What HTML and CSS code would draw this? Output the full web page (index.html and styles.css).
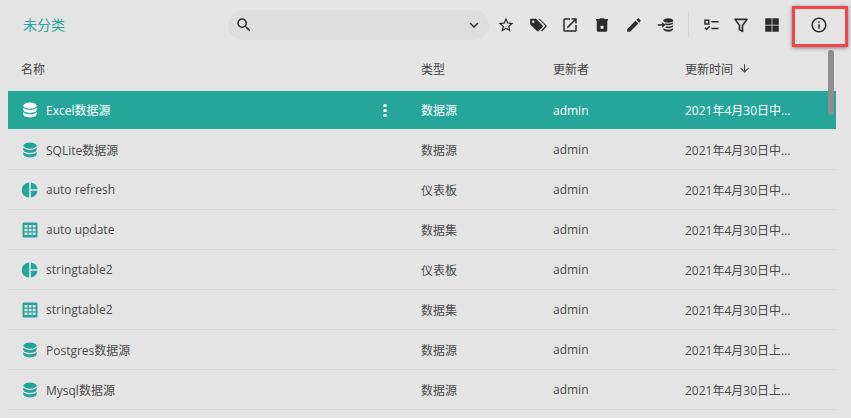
FILE: index.html
```html
<!DOCTYPE html>
<html lang="zh-CN">
<head>
<meta charset="UTF-8">
<title>未分类</title>
<link rel="stylesheet" href="styles.css">
</head>
<body>
<svg class="defs" width="0" height="0">
	<symbol id="i-db" viewBox="0 0 16 16"><ellipse cx="8" cy="3.6" rx="6.7" ry="3.1"/><path d="M1.300 5.600v2.200c0 1.700 3 3.100 6.700 3.100s6.700-1.400 6.700-3.100V5.600c-1.300 1.500-3.900 2.300-6.700 2.300s-5.400-.8-6.700-2.300z"/><path d="M1.300 10v2.300c0 1.700 3 3.100 6.700 3.100s6.700-1.400 6.700-3.100V10c-1.300 1.500-3.900 2.300-6.700 2.300S2.600 11.500 1.300 10z"/></symbol>
	<symbol id="i-pie" viewBox="0 0 16 16"><path d="M7.200 .5v15A7.500 7.500 0 0 1 7.200 .5z"/><path d="M8.800 .5a7.500 7.500 0 0 1 6.700 6.700H8.800z"/><path d="M8.800 8.800h6.700a7.500 7.500 0 0 1-6.700 6.700z"/></symbol>
	<symbol id="i-table" viewBox="0 0 16 16"><path fill-rule="evenodd" d="M1.500 .5h13a1 1 0 0 1 1 1v13a1 1 0 0 1-1 1h-13a1 1 0 0 1-1-1v-13a1 1 0 0 1 1-1zM2.500 3v2.500h3V3zm4.200 0v2.500h2.800V3zm4 0v2.500h2.800V3zM2.500 6.800v2.500h3V6.800zm4.200 0v2.500h2.800V6.800zm4 0v2.500h2.800V6.800zM2.500 10.500V13h3v-2.500zm4.200 0V13h2.800v-2.500zm4 0V13h2.800v-2.500z"/></symbol>
</svg>

<div class="page">
	<div class="toolbar">
		<div class="crumb">未分类</div>
		<div class="search">
			<svg class="ic" viewBox="0 0 24 24"><path d="M15.500 14h-.79l-.28-.27A6.470 6.470 0 0 0 16 9.500 6.500 6.500 0 1 0 9.500 16c1.610 0 3.090-.59 4.230-1.570l.27.28v.79l5 4.990L20.490 19l-4.990-5zm-6 0C7.010 14 5 11.990 5 9.500S7.010 5 9.500 5 14 7.010 14 9.500 11.990 14 9.500 14z"/></svg>
			<svg class="ic" viewBox="0 0 24 24"><path d="M7.410 8.590 12 13.170l4.590-4.580L18 10l-6 6-6-6z"/></svg>
		</div>
		<div class="tools">
			<svg class="ic" viewBox="0 0 24 24"><path d="M22 9.240l-7.190-.62L12 2 9.190 8.630 2 9.240l5.460 4.730L5.820 21 12 17.270 18.180 21l-1.630-7.030L22 9.240zM12 15.400l-3.760 2.270 1-4.280-3.320-2.880 4.380-.38L12 6.100l1.710 4.040 4.380.38-3.320 2.880 1 4.280L12 15.400z"/></svg>
			<svg class="ic" viewBox="0 0 24 24"><path fill-rule="evenodd" d="M1.500 3.500h7.200a1.500 1.500 0 0 1 1.100.4l8.400 8.600a1.500 1.500 0 0 1 0 2.100l-5.400 5.500a1.500 1.500 0 0 1-2.100 0L2 11.500a1.500 1.500 0 0 1-.5-1.100zM5.500 6a1.700 1.700 0 1 0 0 3.400 1.700 1.700 0 0 0 0-3.400z"/><path d="M12.500 3.500h1.800l8.700 8.900a1.800 1.800 0 0 1 0 2.400l-5.700 5.700-1.200-1.200 5.300-5.500a.8.8 0 0 0 0-1.100z"/></svg>
			<svg class="ic" viewBox="0 0 24 24"><path d="M19 19H5V5h7V3H5a2 2 0 0 0-2 2v14a2 2 0 0 0 2 2h14c1.100 0 2-.9 2-2v-7h-2v7zM14 3v2h3.590l-9.830 9.830 1.410 1.410L19 6.410V10h2V3h-7z"/></svg>
			<svg class="ic" viewBox="0 0 24 24"><path d="M15 4V3H9v1H4v2h1v13c0 1.100.9 2 2 2h10c1.100 0 2-.9 2-2V6h1V4h-5zm-.5 12.100-1.400 1.400-1.100-1.100-1.100 1.100-1.400-1.400 1.100-1.100-1.100-1.100 1.400-1.400 1.100 1.100 1.100-1.100 1.400 1.400-1.100 1.100 1.100 1.100z"/></svg>
			<svg class="ic" viewBox="0 0 24 24"><path d="M3 17.250V21h3.750L17.810 9.940l-3.750-3.750L3 17.250zM20.710 7.040a1 1 0 0 0 0-1.410l-2.340-2.340a1 1 0 0 0-1.410 0l-1.830 1.830 3.750 3.750 1.830-1.830z"/></svg>
			<svg class="ic" viewBox="0 0 24 24"><path d="M15 3c-3.600 0-6.500 1.300-6.500 3s2.900 3 6.500 3 6.500-1.300 6.500-3-2.900-3-6.500-3z"/><path d="M21.500 8c-1.300 1.400-3.700 2.300-6.500 2.300-1.600 0-3-.3-4.300-.8L9.500 11c1.300.7 3.300 1.300 5.500 1.300 3.600 0 6.500-1.300 6.500-3z"/><path d="M21.500 12c-1.300 1.400-3.700 2.300-6.500 2.300-.9 0-1.700-.1-2.500-.2l-1.700 1.600c1.200.4 2.700.6 4.200.6 3.600 0 6.500-1.300 6.500-3z"/><path d="M21.500 16c-1.300 1.400-3.700 2.300-6.500 2.300-2.800 0-5.200-.9-6.500-2.300v1.800c0 1.700 2.900 3.200 6.500 3.200s6.500-1.500 6.500-3.200z"/><path d="M1 11h6V8.200l4.300 3.800L7 15.800V13H1z"/></svg>
			<span class="sep"></span>
			<svg class="ic tight" viewBox="0 0 24 24"><path fill-rule="evenodd" d="M3 4.500h7v7H3zM5 6.500v3h3v-3z"/><path d="M12.500 6.500H22v2h-9.500zM12.500 15.500H22v2h-9.500zM3.200 16.300l1.400-1.400 1.500 1.500 3.500-3.500 1.400 1.400-4.900 4.900z"/></svg>
			<svg class="ic narrow" viewBox="0 0 24 24"><path fill="none" stroke="#2b2b2b" stroke-width="2.200" stroke-linejoin="round" d="M4 4.500h16l-6 8v8l-4-2v-6z"/></svg>
			<svg class="ic" viewBox="0 0 24 24"><path d="M3 3h8.500v8.500H3zM12.500 3H21v8.500h-8.500zM3 12.500h8.500V21H3zM12.500 12.500H21V21h-8.500z"/></svg>
			<svg class="ic info" viewBox="0 0 24 24"><path d="M11 7h2v2h-2zm0 4h2v6h-2zm1-9C6.480 2 2 6.480 2 12s4.480 10 10 10 10-4.480 10-10S17.520 2 12 2zm0 18c-4.410 0-8-3.590-8-8s3.590-8 8-8 8 3.590 8 8-3.590 8-8 8z"/></svg>
		</div>
	</div>

	<div class="head row-grid">
		<div class="head-name">名称</div>
		<div>类型</div>
		<div>更新者</div>
		<div class="head-time">更新时间
			<svg class="arrow" viewBox="0 0 24 24"><path d="M20 12l-1.410-1.410L13 16.170V4h-2v12.170l-5.580-5.590L4 12l8 8 8-8z"/></svg>
		</div>
	</div>

	<div class="row row-grid active">
		<div class="name"><svg class="kind"><use href="#i-db"/></svg>Excel数据源<span class="dots"><i></i><i></i><i></i></span></div>
		<div>数据源</div><div>admin</div><div>2021年4月30日中...</div>
	</div>
	<div class="row row-grid">
		<div class="name"><svg class="kind"><use href="#i-db"/></svg>SQLite数据源</div>
		<div>数据源</div><div>admin</div><div>2021年4月30日中...</div>
	</div>
	<div class="row row-grid">
		<div class="name"><svg class="kind"><use href="#i-pie"/></svg>auto refresh</div>
		<div>仪表板</div><div>admin</div><div>2021年4月30日中...</div>
	</div>
	<div class="row row-grid">
		<div class="name"><svg class="kind"><use href="#i-table"/></svg>auto update</div>
		<div>数据集</div><div>admin</div><div>2021年4月30日中...</div>
	</div>
	<div class="row row-grid">
		<div class="name"><svg class="kind"><use href="#i-pie"/></svg>stringtable2</div>
		<div>仪表板</div><div>admin</div><div>2021年4月30日中...</div>
	</div>
	<div class="row row-grid">
		<div class="name"><svg class="kind"><use href="#i-table"/></svg>stringtable2</div>
		<div>数据集</div><div>admin</div><div>2021年4月30日中...</div>
	</div>
	<div class="row row-grid">
		<div class="name"><svg class="kind"><use href="#i-db"/></svg>Postgres数据源</div>
		<div>数据源</div><div>admin</div><div>2021年4月30日上...</div>
	</div>
	<div class="row row-grid">
		<div class="name"><svg class="kind"><use href="#i-db"/></svg>Mysql数据源</div>
		<div>数据源</div><div>admin</div><div>2021年4月30日上...</div>
	</div>

	<div class="scrollbar"></div>
	<div class="callout"></div>
</div>
</body>
</html>
```

FILE: styles.css
```css
* {
	box-sizing: border-box;
}
html, body {
	margin: 0;
	height: 100%;
	overflow: hidden;
}
body {
	background: #e4e4e4;
	color: #4a4a4a;
	font-family: "Open Sans", "Noto Sans CJK SC", sans-serif;
	font-size: 12px;
}
.defs {
	position: absolute;
}
.page {
	position: relative;
	height: 418px;
	padding: 0 15px 0 8px;
}

/* top bar */
.toolbar {
	display: flex;
	align-items: center;
	height: 50px;
}
.crumb {
	flex: none;
	width: 220px;
	padding: 0 0 3px 15px;
	color: #26a69a;
	font-size: 14px;
}
.search {
	display: flex;
	flex: none;
	align-items: center;
	justify-content: space-between;
	width: 261px;
	height: 30px;
	padding: 0 6px 0 7px;
	background: #dedede;
	border-radius: 15px;
}
.ic {
	display: block;
	width: 18px;
	height: 18px;
	flex: none;
	fill: #2b2b2b;
}
.tools {
	display: flex;
	flex: none;
	align-items: center;
	padding-left: 8px;
}
.tools .ic {
	margin-right: 14px;
}
.sep {
	width: 1px;
	height: 26px;
	margin: 0 13px 0 -1px;
	background: #d8d8d8;
}
.tools .tight {
	margin-right: 12px;
}
.tools .narrow {
	margin-right: 13px;
}
.tools .info {
	margin: 0 0 0 15px;
}

/* table */
.row-grid {
	display: grid;
	grid-template-columns: 413px 132px 132px 1fr;
	align-items: center;
}
.head {
	height: 41px;
	padding-bottom: 4px;
	color: #444;
}
.head-name {
	padding-left: 13px;
}
.head-time {
	display: flex;
	align-items: center;
	gap: 5px;
}
.arrow {
	width: 13px;
	height: 13px;
	fill: #444;
}
.row {
	height: 40px;
	border-bottom: 1px solid #d9d9d9;
}
.row.active {
	height: 38px;
	margin-bottom: 1px;
	background: #26a69a;
	border-bottom: 0;
	color: #fff;
}
.name {
	display: flex;
	align-items: center;
	padding-left: 14px;
}
.kind {
	width: 16px;
	height: 16px;
	margin-right: 8px;
	fill: #26a69a;
}
.active .kind {
	fill: #fff;
}
.dots {
	display: flex;
	flex-direction: column;
	gap: 2px;
	margin-left: auto;
	margin-right: 34px;
}
.dots i {
	width: 4px;
	height: 3px;
	background: #fff;
	border-radius: 50%;
}

/* overlays */
.scrollbar {
	position: absolute;
	top: 50px;
	left: 828px;
	width: 6px;
	height: 65px;
	background: #8e8e8e;
	border-radius: 3px;
}
.callout {
	position: absolute;
	top: 6px;
	left: 792px;
	width: 56px;
	height: 41px;
	border: 3px solid #f44548;
	box-shadow: 0 1px 4px rgba(0, 0, 0, 0.45);
}
```
